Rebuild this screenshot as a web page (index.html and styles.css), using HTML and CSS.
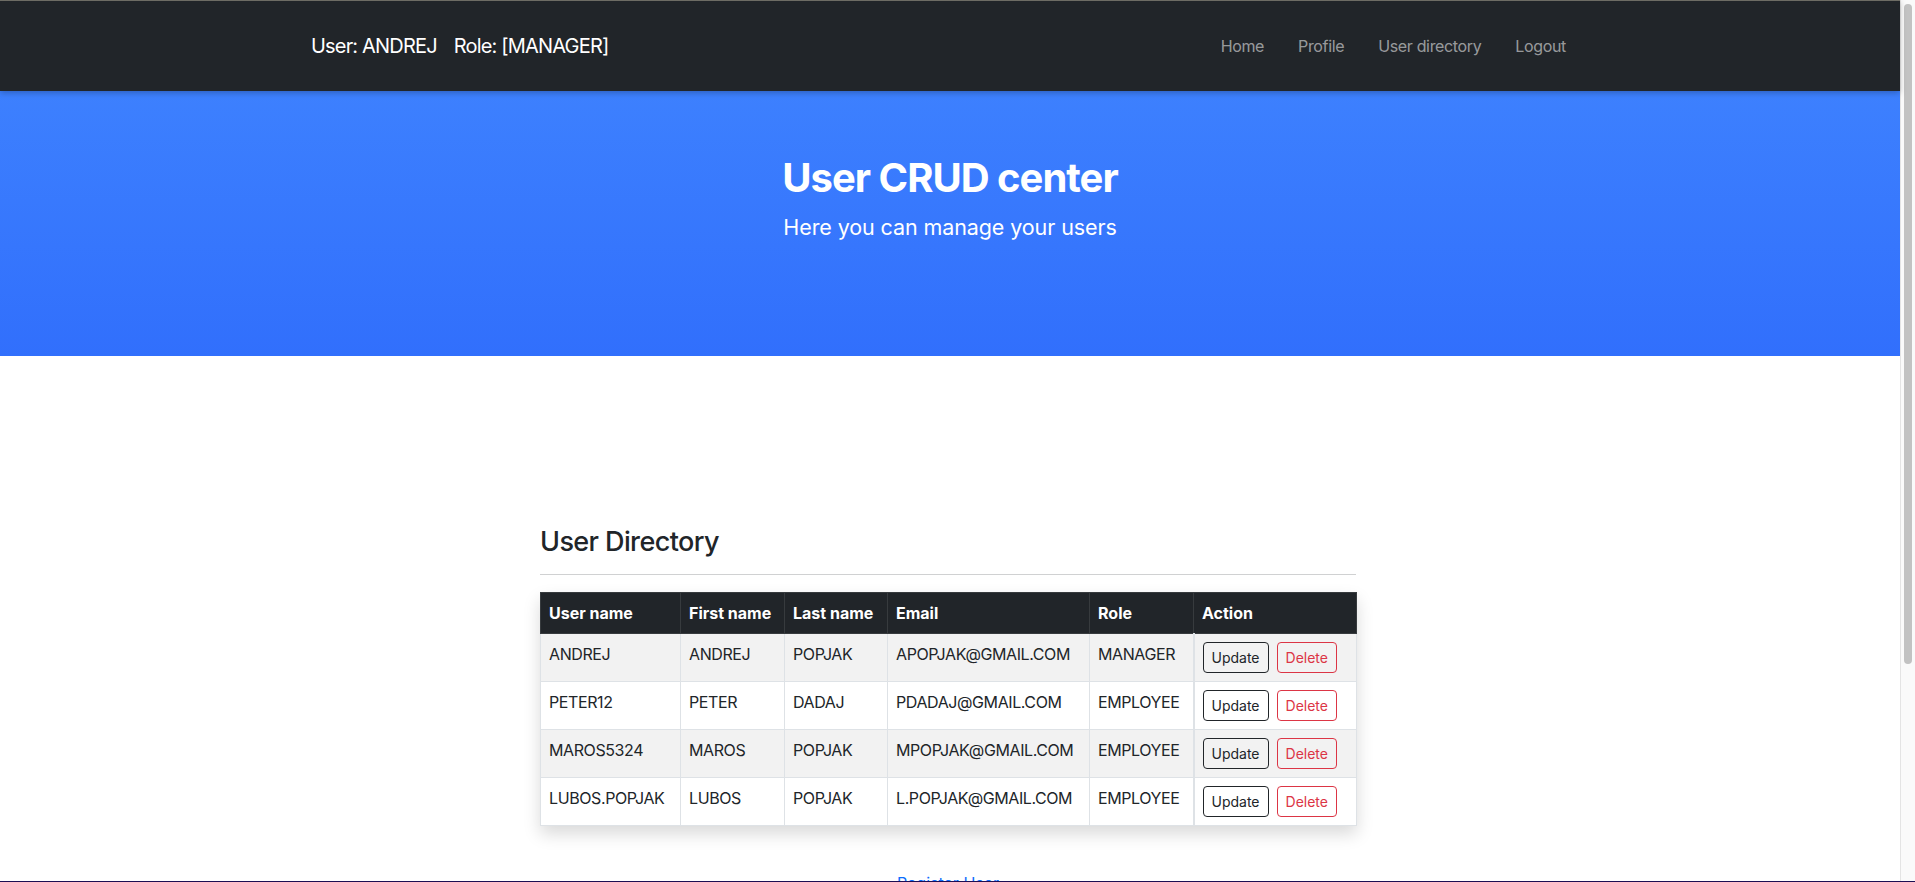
FILE: index.html
```html
<!DOCTYPE html>
<html lang="en">
<head>
<meta charset="utf-8">
<title>User CRUD center</title>
<link rel="stylesheet" href="styles.css">
</head>
<body>
<div class="page">
  <nav class="topbar">
    <div class="topbar-inner">
      <div class="brand"><span>User: ANDREJ</span><span class="brand-role">Role: [MANAGER]</span></div>
      <ul class="nav-links">
        <li><a href="#">Home</a></li>
        <li><a href="#">Profile</a></li>
        <li><a href="#">User directory</a></li>
        <li><a href="#">Logout</a></li>
      </ul>
    </div>
  </nav>
  <header class="hero">
    <h1>User CRUD center</h1>
    <p>Here you can manage your users</p>
  </header>
  <main class="content">
    <section class="directory">
      <h2>User Directory</h2>
      <hr class="divider">
      <table class="users">
        <thead>
          <tr>
            <th class="col-user">User name</th>
            <th class="col-first">First name</th>
            <th class="col-last">Last name</th>
            <th class="col-email">Email</th>
            <th class="col-role">Role</th>
            <th class="col-action">Action</th>
          </tr>
        </thead>
        <tbody>
          <tr>
            <td>ANDREJ</td><td>ANDREJ</td><td>POPJAK</td><td>APOPJAK@GMAIL.COM</td><td>MANAGER</td>
            <td class="action"><button class="btn btn-dark">Update</button><button class="btn btn-danger">Delete</button></td>
          </tr>
          <tr>
            <td>PETER12</td><td>PETER</td><td>DADAJ</td><td>PDADAJ@GMAIL.COM</td><td>EMPLOYEE</td>
            <td class="action"><button class="btn btn-dark">Update</button><button class="btn btn-danger">Delete</button></td>
          </tr>
          <tr>
            <td>MAROS5324</td><td>MAROS</td><td>POPJAK</td><td>MPOPJAK@GMAIL.COM</td><td>EMPLOYEE</td>
            <td class="action"><button class="btn btn-dark">Update</button><button class="btn btn-danger">Delete</button></td>
          </tr>
          <tr>
            <td>LUBOS.POPJAK</td><td>LUBOS</td><td>POPJAK</td><td>L.POPJAK@GMAIL.COM</td><td>EMPLOYEE</td>
            <td class="action"><button class="btn btn-dark">Update</button><button class="btn btn-danger">Delete</button></td>
          </tr>
        </tbody>
      </table>
      <a class="register" href="#">Register User</a>
    </section>
  </main>
</div>
<div class="scrollbar"><div class="scrollbar-thumb"></div></div>
<div class="frame-bottom"></div>
</body>
</html>
```
FILE: styles.css
```css
* { box-sizing: border-box; }

body {
  margin: 0;
  height: 100vh;
  overflow: hidden;
  display: flex;
  font-family: Inter, "Liberation Sans", sans-serif;
  font-size: 16px;
  line-height: 1.5;
  color: #212529;
  background: #fff;
}

.page { flex: 1; min-width: 0; }

.scrollbar {
  flex: 0 0 15px;
  background: #fafafa;
  border-left: 1px solid #e4e4e4;
  padding: 4px 3px 0 3px;
}
.scrollbar-thumb {
  width: 8px;
  height: 660px;
  border-radius: 4px;
  background: #c2c2c2;
}

.topbar {
  position: relative;
  z-index: 1;
  height: 91px;
  background: #212529;
  border-top: 1px solid #6d6c64;
  display: flex;
  align-items: center;
  box-shadow: 0 2px 6px rgba(0, 0, 0, 0.25);
}
.topbar-inner {
  width: 1320px;
  margin: 0 auto;
  padding: 0 27px 0 21px;
  display: flex;
  justify-content: space-between;
  align-items: center;
}
.brand { color: #fff; font-size: 20px; line-height: 30px; letter-spacing: -0.82px; }
.brand-role { margin-left: 17px; }
.nav-links { display: flex; list-style: none; margin: 0; padding: 0; }
.nav-links a {
  display: block;
  padding: 8px 17px;
  color: rgba(255, 255, 255, 0.55);
  text-decoration: none;
  letter-spacing: -0.35px;
}

.hero {
  height: 265px;
  padding-top: 63px;
  text-align: center;
  color: #fff;
  background: linear-gradient(180deg, #3d80fe 0%, #316ffc 100%);
}
.hero h1 { margin: 0; font-size: 40px; line-height: 48px; font-weight: 700; letter-spacing: -1px; }
.hero p { margin: 9px 0 0; font-size: 21.5px; line-height: 32px; letter-spacing: -0.1px; }

.content { padding: 169px 0 270px; }
.directory { width: 820px; padding-right: 4px; margin: 0 auto; }
.directory h2 { margin: 0; font-size: 27px; font-weight: 500; line-height: 34px; letter-spacing: -0.6px; }
.divider { margin: 15px 0 17px; border: 0; border-top: 1px solid #d0d1d2; }

.users {
  width: 816px;
  table-layout: fixed;
  border-collapse: collapse;
  box-shadow: 0 8px 16px rgba(0, 0, 0, 0.15);
}
.users th, .users td {
  padding: 8px;
  border: 1px solid #dee2e6;
  text-align: left;
  vertical-align: top;
}
.users td { letter-spacing: -0.4px; }
.users thead th {
  background: #212529;
  color: #fff;
  font-weight: 700;
  border-color: #373b3e;
}
.users tbody tr:nth-child(odd) td { background: #f2f2f2; }
.col-user { width: 140px; }
.col-first { width: 104px; }
.col-last { width: 103px; }
.col-email { width: 202px; }
.col-role { width: 104px; }
.col-action { width: 163px; }
.users .action { border-left: 2px solid #dee2e6; padding-left: 8px; letter-spacing: 0; }

.btn {
  font-family: inherit;
  font-size: 14px;
  line-height: 21px;
  padding: 4px 8px;
  border: 1px solid;
  border-radius: 4px;
  background: transparent;
}
.btn-dark { color: #212529; border-color: #212529; }
.btn-danger { color: #dc3545; border-color: #dc3545; margin-left: 8px; }

.register {
  display: block;
  margin-top: 45px;
  text-align: center;
  color: #0d6efd;
  text-decoration: none;
}

.frame-bottom {
  position: fixed;
  left: 0;
  right: 0;
  bottom: 0;
  height: 1px;
  background: #1c0d52;
}
```
